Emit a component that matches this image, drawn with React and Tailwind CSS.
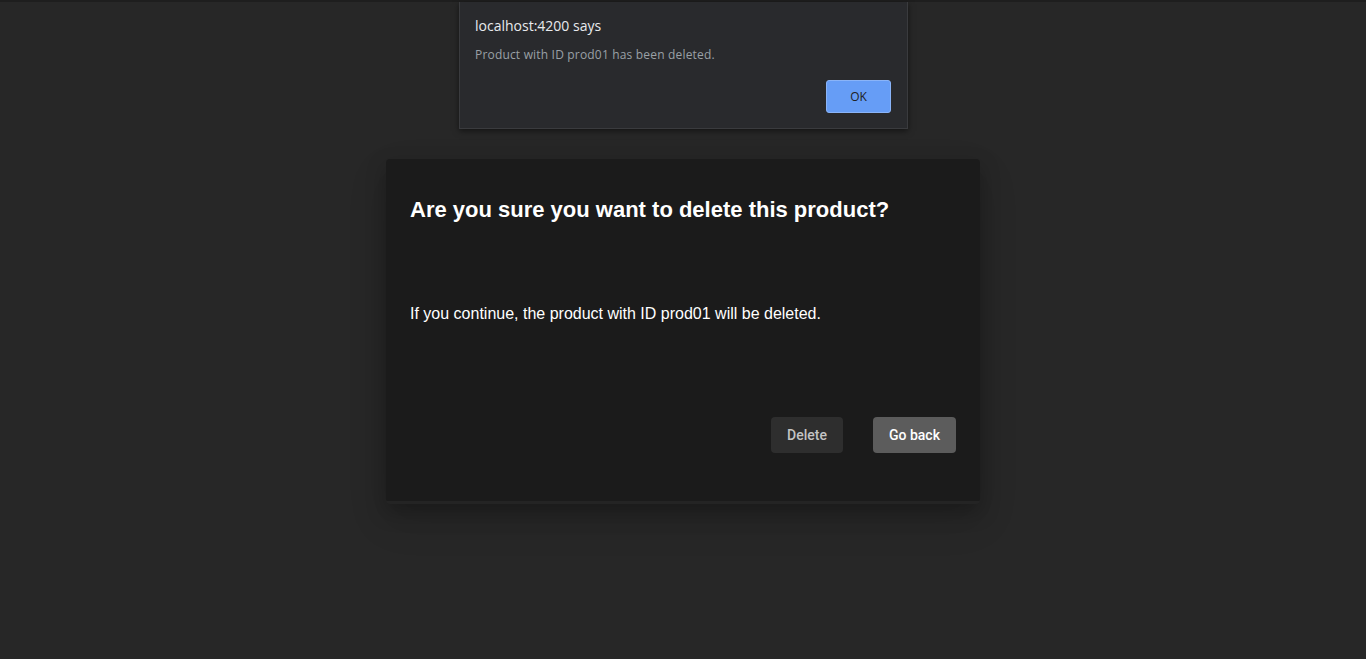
export default function App() {
  return (
    <div className="relative min-h-[659px] w-full bg-[#272727] border-t-2 border-[#1e1e1e]">
      {/* browser alert */}
      <div className="absolute left-[459px] top-0 w-[449px] h-[127px] bg-[#292a2d] border border-t-0 border-[#3a3b3e] shadow-[0_2px_6px_rgba(0,0,0,0.5)] px-[15px] pt-[13px] font-['Open_Sans',sans-serif]">
        <div className="text-[14px] leading-[22px] text-[#e8eaed]">localhost:4200 says</div>
        <div className="mt-[9px] text-[12px] leading-[18px] tracking-[0.18px] text-[#9aa0a6]">Product with ID prod01 has been deleted.</div>
        <div className="flex justify-end mt-[16px] pr-px">
          <button className="w-[65px] h-[33px] rounded-[3px] bg-[#669df6] border border-[#8ab4f8] text-[12px] text-[#202124]">OK</button>
        </div>
      </div>

      <div className="flex justify-center pt-[157px]">
        <div className="w-[594px] h-[345px] rounded-[4px] bg-[#1b1b1b] shadow-[0_8px_20px_rgba(0,0,0,0.25),0_16px_40px_rgba(0,0,0,0.12)] border-b-[3px] border-[#242424] px-6 pt-[36px] flex flex-col font-['Liberation_Sans',Arial,sans-serif]">
          <h2 className="text-[22px] leading-[30px] font-bold text-white">Are you sure you want to delete this product?</h2>
          <p className="mt-[77px] text-[16px] leading-[24px] text-white">If you continue, the product with ID prod01 will be deleted.</p>
          <div className="flex justify-end gap-[30px] mt-[91px]">
            <button className="h-[36px] w-[72px] rounded-[4px] bg-[#2e2e2e] text-[14px] font-medium text-[#c4c4c4] font-['Roboto',sans-serif]">Delete</button>
            <button className="h-[36px] w-[83px] rounded-[4px] bg-[#5c5c5c] text-[14px] font-medium text-white font-['Roboto',sans-serif]">Go back</button>
          </div>
        </div>
      </div>
    </div>
  );
}
